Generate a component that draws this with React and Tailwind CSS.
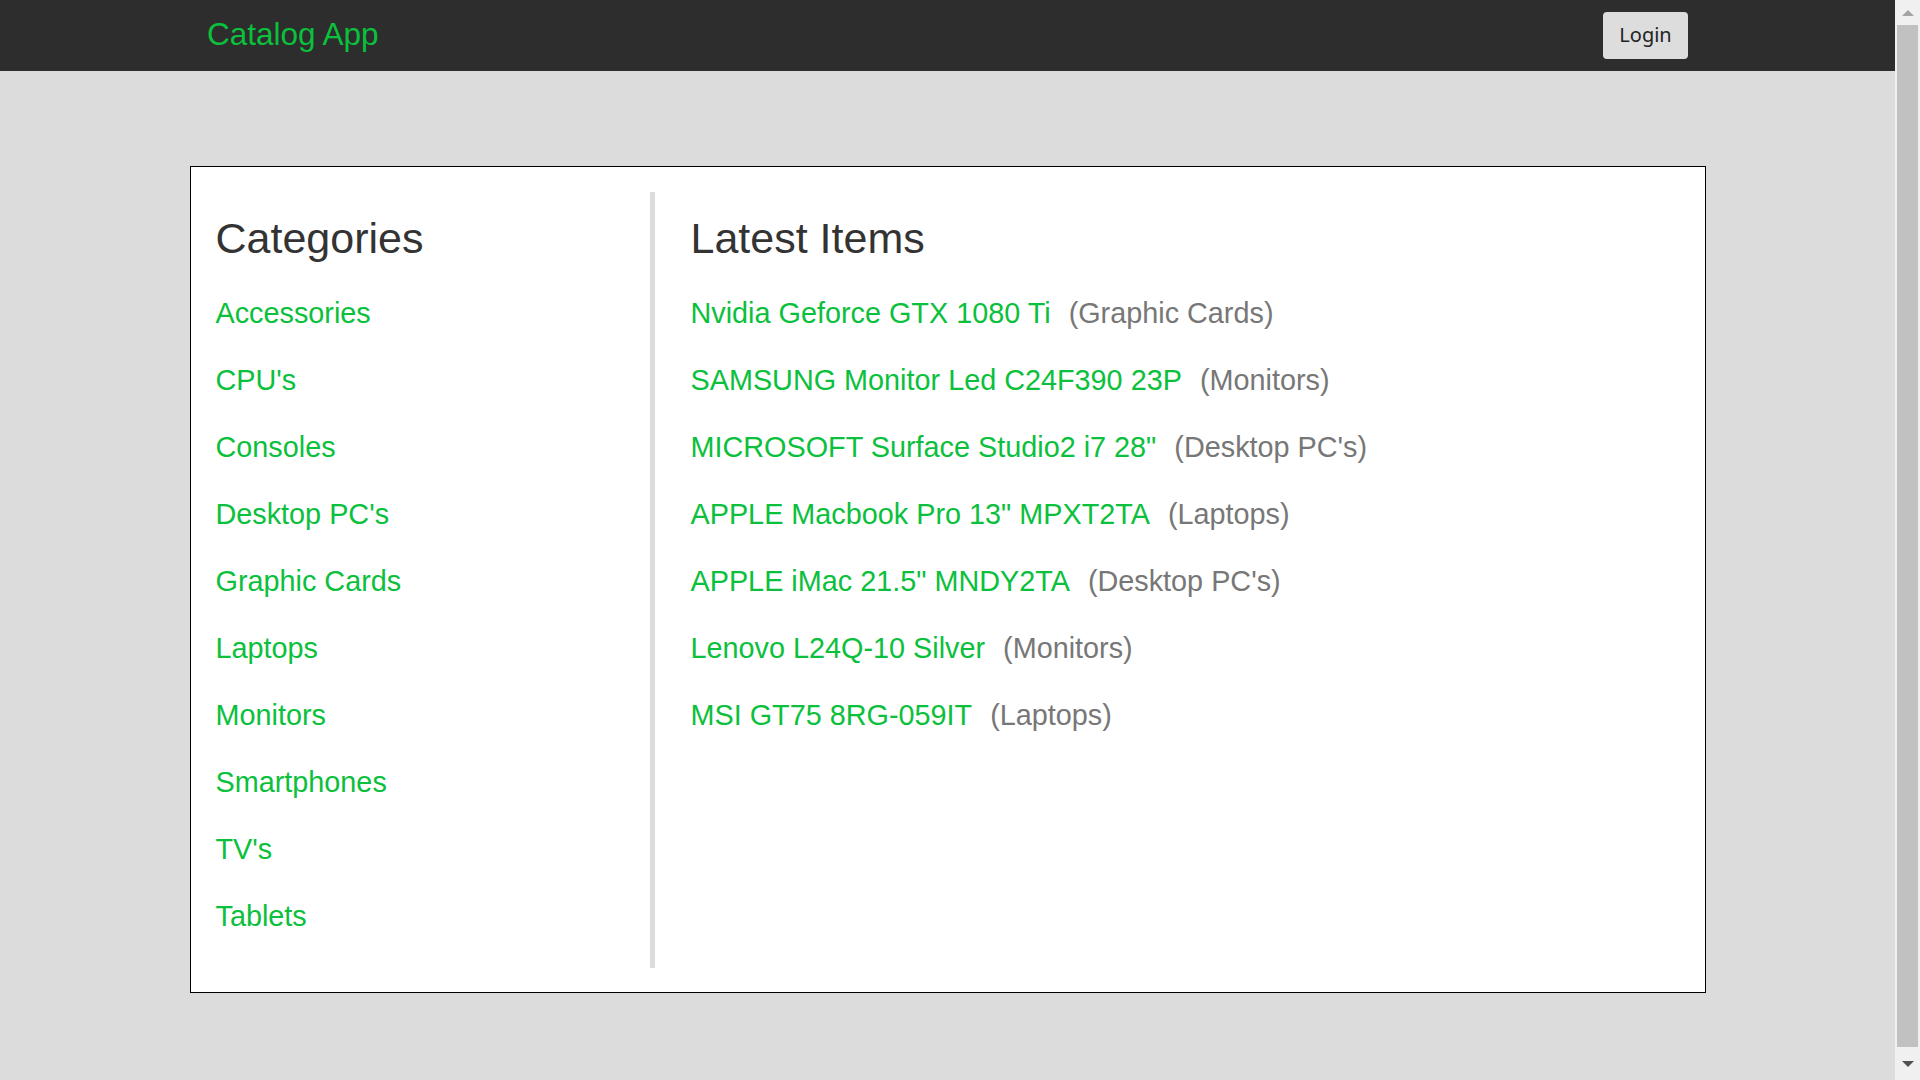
import React from "react";

const categories = [
  "Accessories",
  "CPU's",
  "Consoles",
  "Desktop PC's",
  "Graphic Cards",
  "Laptops",
  "Monitors",
  "Smartphones",
  "TV's",
  "Tablets",
];

const latestItems = [
  { name: "Nvidia Geforce GTX 1080 Ti", category: "Graphic Cards" },
  { name: "SAMSUNG Monitor Led C24F390 23P", category: "Monitors" },
  { name: 'MICROSOFT Surface Studio2 i7 28"', category: "Desktop PC's" },
  { name: 'APPLE Macbook Pro 13" MPXT2TA', category: "Laptops" },
  { name: 'APPLE iMac 21.5" MNDY2TA', category: "Desktop PC's" },
  { name: "Lenovo L24Q-10 Silver", category: "Monitors" },
  { name: "MSI GT75 8RG-059IT", category: "Laptops" },
];

const Header = () => {
  return (
    <header className="h-[71px] bg-[#2d2d2d] flex items-center justify-between px-[207px]">
      <a href="#" className="self-start text-[31.5px] leading-[68px] text-[#0bc03c]">
        Catalog App
      </a>
      <button className="h-[47px] w-[85px] pb-[2px] rounded-[4px] bg-[#dddddd] text-[#222] text-[20px] font-['Noto_Sans',sans-serif] leading-none">
        Login
      </button>
    </header>
  );
};

const Scrollbar = () => {
  return (
    <div className="w-[25px] h-full bg-[#f0f0f0] flex flex-col items-center">
      <div className="h-[25px] flex items-center justify-center">
        <div className="w-0 h-0 border-l-[6px] border-r-[6px] border-b-[6px] border-l-transparent border-r-transparent border-b-[#a3a3a3]" />
      </div>
      <div className="w-[21px] h-[1022px] bg-[#c1c1c1]" />
      <div className="flex-1 flex items-center justify-center">
        <div className="w-0 h-0 border-l-[6px] border-r-[6px] border-t-[6px] border-l-transparent border-r-transparent border-t-[#505050]" />
      </div>
    </div>
  );
};

const App = () => {
  return (
    <div className="flex h-[1080px] overflow-hidden font-['Liberation_Sans',Arial,sans-serif]">
      <div className="flex-1 bg-[#dcdcdc]">
        <Header />
        <main className="w-[80%] mx-auto mt-[95px] bg-white border border-black p-[25px] pb-[24px] flex">
          <section className="w-[434px] pt-[22px] pb-[18px]">
            <h1 className="text-[43px] leading-[48px] text-[#333]">Categories</h1>
            <ul className="mt-[18px]">
              {categories.map((c) => (
                <li key={c} className="text-[28.8px] leading-[67px]">
                  <a href="#" className="text-[#0bc03c]">
                    {c}
                  </a>
                </li>
              ))}
            </ul>
          </section>
          <section className="flex-1 border-l-[5px] border-[#dcdcdc] pl-[36px] pt-[22px]">
            <h1 className="text-[43px] leading-[48px] text-[#333]">Latest Items</h1>
            <ul className="mt-[18px]">
              {latestItems.map((item) => (
                <li key={item.name} className="text-[28.8px] leading-[67px]">
                  <a href="#" className="text-[#0bc03c]">
                    {item.name}
                  </a>
                  <span className="ml-[18px] text-[#777]">({item.category})</span>
                </li>
              ))}
            </ul>
          </section>
        </main>
      </div>
      <Scrollbar />
    </div>
  );
};

export default App;
